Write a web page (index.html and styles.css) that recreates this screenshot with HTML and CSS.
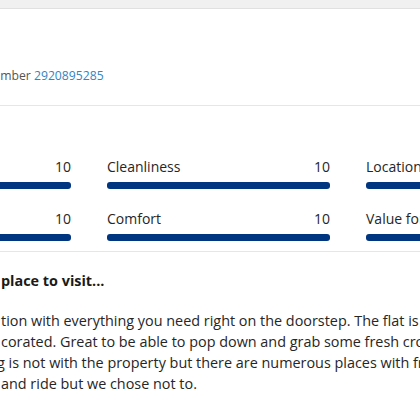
FILE: index.html
```html
<!DOCTYPE html>
<html>
<head>
<meta charset="utf-8">
<link rel="stylesheet" href="styles.css">
</head>
<body>
<div class="topbar"></div>
<div class="header">
  <p class="booking"><span class="label">Booking number</span> <a class="num" href="#">2920895285</a></p>
</div>
<div class="ratings">
  <div class="grid">
    <div class="item"><div class="row"><span>Staff</span><span>10</span></div><div class="bar"></div></div>
    <div class="item"><div class="row"><span>Cleanliness</span><span>10</span></div><div class="bar"></div></div>
    <div class="item"><div class="row"><span>Location</span><span>10</span></div><div class="bar"></div></div>
    <div class="item"><div class="row"><span>Facilities</span><span>10</span></div><div class="bar"></div></div>
    <div class="item"><div class="row"><span>Comfort</span><span>10</span></div><div class="bar"></div></div>
    <div class="item"><div class="row"><span>Value for money</span><span>10</span></div><div class="bar"></div></div>
  </div>
</div>
<div class="review">
  <h3 class="title">place to visit...</h3>
  <p class="text">tion with everything you need right on the doorstep. The flat is beautifully<br>corated. Great to be able to pop down and grab some fresh croissants<br><span class="cut">g</span> is not with the property but there are numerous places with free parking<br>and ride but we chose not to.</p>
</div>
</body>
</html>
```
FILE: styles.css
```css
html, body {
  margin: 0;
  padding: 0;
  overflow: hidden;
  background: #fff;
  width: 420px;
  height: 420px;
}
body {
  font-family: "Open Sans", "Noto Sans", sans-serif;
  color: #262626;
}
.topbar {
  height: 8px;
  background: #f0f0f0;
  border-bottom: 1px solid #e0e0e0;
}
.header {
  padding: 59px 0 21px;
  border-bottom: 1px solid #e6e6e6;
}
.booking {
  margin: 0 0 0 -64px;
  font-size: 12.2px;
  line-height: 16px;
  color: #555;
  white-space: nowrap;
}
.num {
  color: #3383c0;
  text-decoration: none;
}
.ratings {
  padding: 51px 0 10px;
  border-bottom: 1px solid #e6e6e6;
}
.grid {
  margin-left: -152px;
  width: 741px;
  display: grid;
  grid-template-columns: 223px 223px 223px;
  column-gap: 36px;
  row-gap: 20px;
}
.item {
  display: flex;
  flex-direction: column;
  gap: 5px;
}
.row {
  display: flex;
  justify-content: space-between;
  font-size: 14px;
  line-height: 20px;
  color: #262626;
  white-space: nowrap;
}
.bar {
  height: 7px;
  border-radius: 3px;
  background: #003580;
}
.review {
  padding: 19px 0 0 1px;
}
.title {
  margin: 0;
  font-size: 14.4px;
  line-height: 20px;
  font-weight: 700;
  color: #1a1a1a;
}
.text {
  margin: 19px 0 0;
  font-size: 14.4px;
  line-height: 21px;
  color: #262626;
  white-space: nowrap;
}
.cut {
  margin-left: -4px;
}
```
